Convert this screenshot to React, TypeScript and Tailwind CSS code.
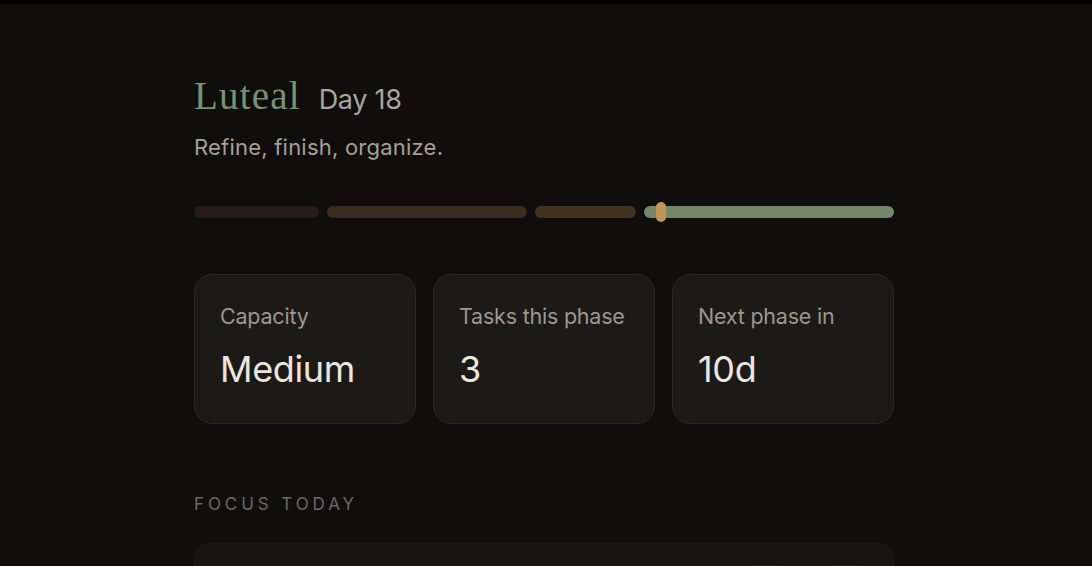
import React from "react";

const sans = { fontFamily: "Inter, 'Noto Sans', sans-serif" };

function Stat({ label, value }: { label: string; value: string }) {
  return (
    <div className="flex-1 h-[150px] rounded-[18px] border border-[#2a2925] bg-[#1b1a17] px-[25px] pt-[28px]">
      <div className="text-[21.5px] leading-[26px] text-[#9c978f] tracking-[-0.01em]">{label}</div>
      <div className="mt-[19px] text-[36px] leading-[42px] text-[#ebe7de] tracking-[-0.01em]">{value}</div>
    </div>
  );
}

export default function App() {
  return (
    <div className="min-h-[566px] bg-[#0f0e0c] overflow-hidden" style={sans}>
      <div className="h-[4px] bg-black" />
      <div className="mx-auto w-[704px] pr-[4px] pt-[70px]">
        <div className="flex items-baseline gap-[18px]">
          <span
            className="text-[39px] leading-[44px] text-[#7b926f] tracking-[0.03em]"
            style={{ fontFamily: "'Liberation Serif', serif" }}
          >
            Luteal
          </span>
          <span className="text-[27px] leading-[32px] text-[#aaa59d] tracking-[-0.01em]">Day 18</span>
        </div>
        <div className="mt-[15px] text-[22px] leading-[28px] text-[#a5a098] tracking-[0.01em]">Refine, finish, organize.</div>

        <div className="relative mt-[45px] flex gap-[8px] h-[12px]">
          <div className="grow-[5] basis-0 rounded-full bg-[#251b1d]" />
          <div className="grow-[8] basis-0 rounded-full bg-[#3a2c1f]" />
          <div className="grow-[4] basis-0 rounded-full bg-[#433420]" />
          <div className="grow-[10] basis-0 rounded-full bg-[#728869]" />
          <div className="absolute left-[462px] top-[-4px] h-[20px] w-[10px] rounded-full bg-[#be9552]" />
        </div>

        <div className="mt-[56px] flex gap-[17px]">
          <Stat label="Capacity" value="Medium" />
          <Stat label="Tasks this phase" value="3" />
          <Stat label="Next phase in" value="10d" />
        </div>

        <div className="mt-[70px] text-[17px] leading-[20px] tracking-[0.23em] text-[#6c6963]">FOCUS TODAY</div>

        <div className="relative mt-[28px] h-[80px] rounded-[18px] border border-[#1c1b19] bg-[#161513]">
          <div className="absolute top-[22px] right-[104px] h-[30px] w-[44px] rounded-[8px] bg-[#22211e]" />
          <div className="absolute top-[22px] right-[24px] h-[30px] w-[44px] rounded-[8px] bg-[#22211e]" />
        </div>
      </div>
    </div>
  );
}
